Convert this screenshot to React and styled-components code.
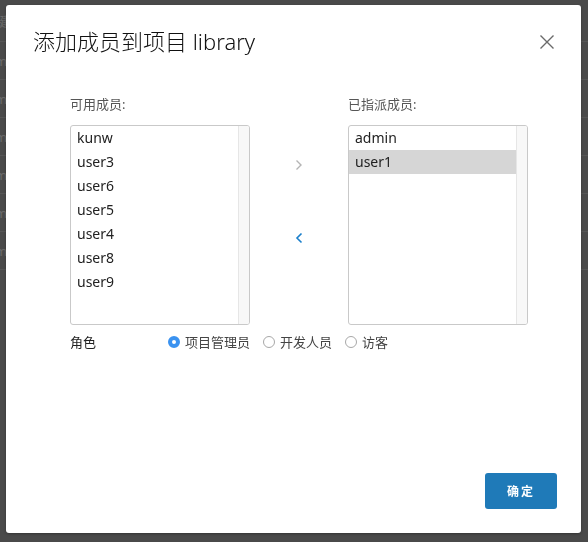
import React, { useState } from 'react'
import styled, { createGlobalStyle } from 'styled-components'

const GlobalStyle = createGlobalStyle`
 html, body {
   margin: 0;
   padding: 0;
   background: #4a4a4a;
   font-family: "Noto Sans", "Noto Sans CJK SC", sans-serif;
 }
 * { box-sizing: border-box; }
`

const available = ['kunw', 'user3', 'user6', 'user5', 'user4', 'user8', 'user9']
const assigned = ['admin', 'user1']
const roles = ['项目管理员', '开发人员', '访客']

const App = () => {
    const [role, setRole] = useState(0)
    const [selected, setSelected] = useState('user1')
    return (
        <>
            <GlobalStyle />
            <Page>
                <PageHead>键</PageHead>
                {[0, 1, 2, 3, 4, 5].map(i => (
                    <PageRow key={i}>m</PageRow>
                ))}
            </Page>
            <Backdrop>
                <Modal>
                    <Header>
                        <Title>添加成员到项目 library</Title>
                        <CloseButton aria-label="close">
                            <svg width="16" height="16" viewBox="0 0 16 16">
                                <path d="M1.5 1.5 L14.5 14.5 M14.5 1.5 L1.5 14.5" stroke="#6a6a6a" strokeWidth="1.4" fill="none" />
                            </svg>
                        </CloseButton>
                    </Header>
                    <Body>
                        <Lists>
                            <Column>
                                <Label>可用成员:</Label>
                                <ListBox>
                                    <Items>
                                        {available.map(name => (
                                            <Item key={name}>{name}</Item>
                                        ))}
                                    </Items>
                                    <Track />
                                </ListBox>
                            </Column>
                            <Middle>
                                <Arrow aria-label="add">
                                    <svg width="8" height="12" viewBox="0 0 8 12">
                                        <path d="M1.5 1.5 L6 6 L1.5 10.5" stroke="#b4b4b4" strokeWidth="1.4" fill="none" />
                                    </svg>
                                </Arrow>
                                <Arrow aria-label="remove">
                                    <svg width="8" height="12" viewBox="0 0 8 12">
                                        <path d="M6.5 1.5 L2 6 L6.5 10.5" stroke="#1a7fcb" strokeWidth="1.6" fill="none" />
                                    </svg>
                                </Arrow>
                            </Middle>
                            <Column>
                                <Label>已指派成员:</Label>
                                <ListBox>
                                    <Items>
                                        {assigned.map(name => (
                                            <Item key={name} active={selected === name} onClick={() => setSelected(name)}>{name}</Item>
                                        ))}
                                    </Items>
                                    <Track />
                                </ListBox>
                            </Column>
                        </Lists>
                        <RoleRow>
                            <RoleLabel>角色</RoleLabel>
                            <Radios>
                                {roles.map((r, i) => (
                                    <RadioOption key={r} onClick={() => setRole(i)}>
                                        <RadioDot checked={role === i} />
                                        {r}
                                    </RadioOption>
                                ))}
                            </Radios>
                        </RoleRow>
                    </Body>
                    <Footer>
                        <PrimaryButton>确定</PrimaryButton>
                    </Footer>
                </Modal>
            </Backdrop>
        </>
    )
}

export default App

const Page = styled.div`
 height: 542px;
 overflow: hidden;
 color: #6a6a6a;
 font-size: 13px;
`
const PageHead = styled.div`
 height: 42px;
 line-height: 42px;
 text-indent: -4px;
 border-bottom: 1px solid #565656;
`
const PageRow = styled.div`
 height: 38px;
 line-height: 38px;
 text-indent: -5px;
 border-bottom: 1px solid #565656;
`
const Backdrop = styled.div`
 position: fixed;
 inset: 0;
 padding: 5px 0 0 6px;
`
const Modal = styled.div`
 width: 575px;
 height: 528px;
 background: #fff;
 border-radius: 3px;
 box-shadow: 0 1px 3px rgba(0,0,0,0.3);
 display: flex;
 flex-direction: column;
`
const Header = styled.div`
 display: flex;
 align-items: center;
 justify-content: space-between;
 padding: 22px 26px 0 27px;
`
const Title = styled.h3`
 margin: 0;
 font-size: 22px;
 line-height: 28px;
 font-weight: 300;
 color: #111;
`
const CloseButton = styled.button`
 border: none;
 background: none;
 padding: 0;
 width: 16px;
 height: 16px;
 display: flex;
 margin-top: 2px;
 cursor: pointer;
`
const Body = styled.div`
 flex: 1;
 padding: 40px 0 0 64px;
`
const Lists = styled.div`
 display: flex;
`
const Column = styled.div`
 width: 180px;
 display: flex;
 flex-direction: column;
`
const Label = styled.div`
 font-size: 13px;
 line-height: 18px;
 color: #565656;
 margin-bottom: 12px;
`
const ListBox = styled.div`
 height: 200px;
 border: 1px solid #c9c9c9;
 border-radius: 3px;
 display: flex;
 overflow: hidden;
`
const Items = styled.div`
 flex: 1;
 display: flex;
 flex-direction: column;
`
const Item = styled.div`
 height: 24px;
 line-height: 24px;
 padding-left: 6px;
 font-size: 14px;
 color: #222;
 background: ${p => p.active ? '#d6d6d6' : 'transparent'};
 cursor: default;
`
const Track = styled.div`
 width: 11px;
 background: #f8f8f8;
 border-left: 1px solid #e6e6e6;
`
const Middle = styled.div`
 width: 98px;
 display: flex;
 flex-direction: column;
 align-items: center;
 padding-top: 58px;
 gap: 49px;
`
const Arrow = styled.button`
 border: none;
 background: none;
 padding: 0;
 width: 24px;
 height: 24px;
 display: flex;
 align-items: center;
 justify-content: center;
 cursor: pointer;
`
const RoleRow = styled.div`
 display: flex;
 align-items: center;
 margin-top: 8px;
 font-size: 13px;
 line-height: 18px;
`
const RoleLabel = styled.div`
 width: 98px;
 color: #222;
`
const Radios = styled.div`
 display: flex;
 align-items: center;
 gap: 13px;
`
const RadioOption = styled.label`
 display: flex;
 align-items: center;
 gap: 5px;
 color: #444;
 cursor: pointer;
`
const RadioDot = styled.span`
 width: 12px;
 height: 12px;
 border-radius: 50%;
 border: ${p => p.checked ? '4px solid #3a92f0' : '1px solid #a8a8a8'};
 background: #fff;
 display: inline-block;
`
const Footer = styled.div`
 display: flex;
 justify-content: flex-end;
 padding: 0 24px 24px 0;
`
const PrimaryButton = styled.button`
 width: 72px;
 height: 36px;
 border: none;
 border-radius: 3px;
 background: #1f7ab8;
 color: #fff;
 font-family: "Noto Sans", "Noto Sans CJK SC", sans-serif;
 font-size: 12px;
 font-weight: 700;
 letter-spacing: 2px;
 cursor: pointer;
`
